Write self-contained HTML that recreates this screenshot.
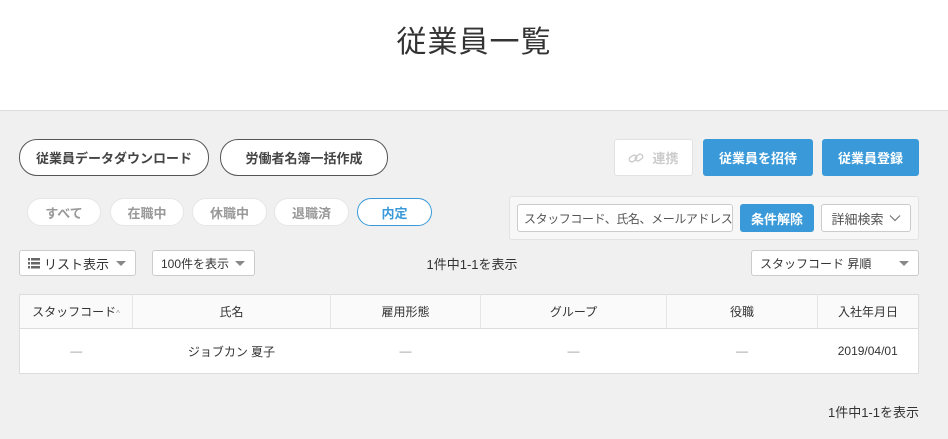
<!DOCTYPE html>
<html><head><meta charset="utf-8"><style>
*{box-sizing:border-box;margin:0;padding:0}
body{width:948px;height:439px;background:#f0f0f0;font-family:"Liberation Sans","Noto Sans CJK JP",sans-serif;color:#333;position:relative;overflow:hidden;font-size:13px}
.hd{position:absolute;left:0;top:0;width:948px;height:111px;background:#fff;border-bottom:1px solid #ddd;text-align:center}
.hd h1{font-weight:400;font-size:30px;line-height:30px;padding-top:28px;color:#333;letter-spacing:1px}
.a{position:absolute;display:flex;align-items:center;justify-content:center;white-space:nowrap}
.pill{border:1px solid #555;border-radius:18px;background:#fff;font-weight:bold;font-size:13px;color:#444}
.f{border:1px solid #e6e6e6;border-radius:14px;background:#fff;color:#999;font-weight:bold;font-size:13px}
.b{background:#3a9ad9;color:#fff;font-weight:bold;border-radius:3px;font-size:13px}
.sel{background:#fff;border:1px solid #ccc;border-radius:3px;font-size:12px;justify-content:flex-start;padding-left:8px}
.tri{position:absolute;right:9px;top:10px;border:5px solid transparent;border-top:5px solid #888;border-bottom:0}
table{position:absolute;left:19px;top:294px;width:900px;border-collapse:collapse;background:#fff;border:1px solid #ddd;font-size:12px}
th{height:34px;background:#fafafa;font-weight:normal;border-right:1px solid #e6e6e6;border-bottom:1px solid #ddd;color:#333}
td{height:45px;text-align:center;color:#333}
td.d{color:#999}
</style></head><body>
<div class="hd"><h1>従業員一覧</h1></div>
<div class="a pill" style="left:19px;top:139px;width:190px;height:37px">従業員データダウンロード</div>
<div class="a pill" style="left:220px;top:139px;width:168px;height:37px">労働者名簿一括作成</div>
<div class="a" style="left:614px;top:139px;width:79px;height:37px;background:#fff;border:1px solid #e2e2e2;border-radius:3px;color:#ccc;font-weight:bold"><svg width="16" height="12" viewBox="0 0 16 12" style="margin-right:8px"><g fill="none" stroke="#ccc" stroke-width="1.4"><rect x="1" y="4" width="8" height="5" rx="2.5" transform="rotate(-35 5 6.5)"/><rect x="7" y="3" width="8" height="5" rx="2.5" transform="rotate(-35 11 5.5)"/></g></svg>連携</div>
<div class="a b" style="left:703px;top:139px;width:110px;height:37px">従業員を招待</div>
<div class="a b" style="left:822px;top:139px;width:97px;height:37px">従業員登録</div>
<div class="a f" style="left:27px;top:198px;width:74px;height:28px">すべて</div>
<div class="a f" style="left:110px;top:198px;width:74px;height:28px">在職中</div>
<div class="a f" style="left:192px;top:198px;width:75px;height:28px">休職中</div>
<div class="a f" style="left:274px;top:198px;width:75px;height:28px">退職済</div>
<div class="a f" style="left:357px;top:198px;width:75px;height:28px;border-color:#3a9ad9;color:#3a9ad9">内定</div>
<div class="a" style="left:509px;top:196px;width:410px;height:44px;background:#f7f7f7;border:1px solid #e2e2e2;border-radius:3px"></div>
<div class="a sel" style="left:517px;top:204px;width:216px;height:28px;font-size:12px;color:#555;overflow:hidden;padding-left:6px;letter-spacing:-0.4px">スタッフコード、氏名、メールアドレス</div>
<div class="a b" style="left:740px;top:204px;width:74px;height:28px">条件解除</div>
<div class="a" style="left:821px;top:204px;width:90px;height:28px;background:#fff;border:1px solid #ccc;border-radius:3px;color:#555">詳細検索 <svg width="12" height="8" style="margin-left:5px"><path d="M1 1.5l5 5 5-5" fill="none" stroke="#777" stroke-width="1.2"/></svg></div>
<div class="a sel" style="left:19px;top:250px;width:117px;height:26px;font-size:13px"><svg width="12" height="11" style="margin-right:4px"><g fill="#666"><rect y="0" width="2" height="2.5"/><rect x="3" y="0" width="9" height="2.5"/><rect y="4" width="2" height="2.5"/><rect x="3" y="4" width="9" height="2.5"/><rect y="8" width="2" height="2.5"/><rect x="3" y="8" width="9" height="2.5"/></g></svg>リスト表示<span class="tri"></span></div>
<div class="a sel" style="left:152px;top:250px;width:103px;height:26px">100件を表示<span class="tri"></span></div>
<div class="a" style="left:372px;top:250px;width:200px;height:26px;font-size:13px">1件中1-1を表示</div>
<div class="a sel" style="left:751px;top:250px;width:168px;height:26px;font-size:12px">スタッフコード 昇順<span class="tri"></span></div>
<table>
<tr><th style="width:113px">スタッフコード<span style="font-size:8px;color:#999">^</span></th><th style="width:198px">氏名</th><th style="width:150px">雇用形態</th><th style="width:186px">グループ</th><th style="width:151px">役職</th><th style="border-right:0">入社年月日</th></tr>
<tr><td class="d">—</td><td>ジョブカン 夏子</td><td class="d">—</td><td class="d">—</td><td class="d">—</td><td>2019/04/01</td></tr>
</table>
<div class="a" style="left:770px;top:401px;width:149px;height:20px;justify-content:flex-end;font-size:13px">1件中1-1を表示</div>
</body></html>
